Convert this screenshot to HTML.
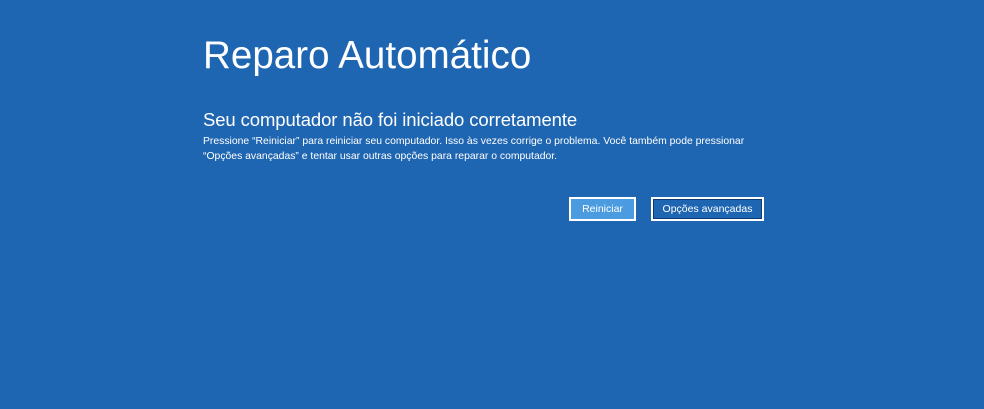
<!DOCTYPE html>
<html><head><meta charset="utf-8"><style>
html,body{margin:0;padding:0}
body{width:984px;height:409px;background:#1f66b2;position:relative;overflow:hidden;font-family:"Liberation Sans","DejaVu Sans",sans-serif;color:#fff}
.t{position:absolute;left:203px;white-space:nowrap;transform-origin:0 0}
#h{top:34px;font-size:38.5px;font-weight:300;letter-spacing:0.05px}
#s{top:109px;font-size:18.5px;letter-spacing:-0.1px}
.b{font-size:10.4px;letter-spacing:0}
.btn{position:absolute;top:197px;height:20px;border:2px solid #fff;font-size:10.5px;text-align:center;line-height:20px;box-sizing:content-box}
</style></head><body>
<div class="t" id="h">Reparo Automático</div>
<div class="t" id="s">Seu computador não foi iniciado corretamente</div>
<div class="t b" style="top:136px">Pressione “Reiniciar” para reiniciar seu computador. Isso às vezes corrige o problema. Você também pode pressionar</div>
<div class="t b" style="top:151px">“Opções avançadas” e tentar usar outras opções para reparar o computador.</div>
<div class="btn" style="left:569px;width:63px;background:#4b9be0">Reiniciar</div>
<div class="btn" style="left:651px;width:109px;background:#1f66b2;outline:1px solid #0d3a70;outline-offset:-3px">Opções avançadas</div>
</body></html>
